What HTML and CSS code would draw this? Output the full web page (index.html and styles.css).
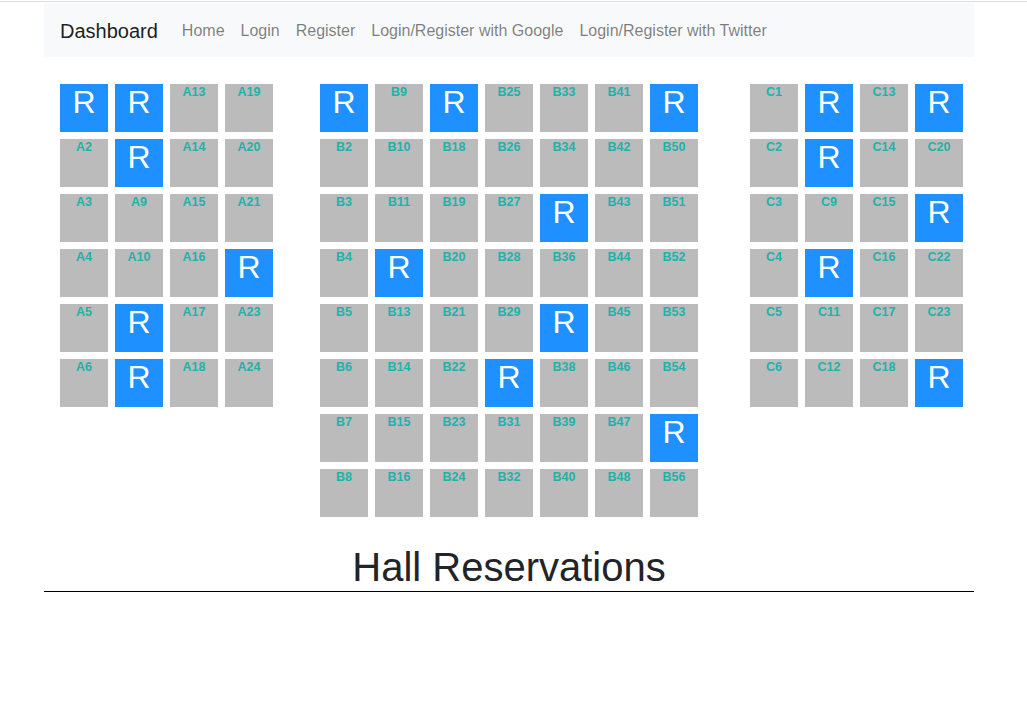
FILE: index.html
```html
<!DOCTYPE html>
<html lang="en">
<head>
    <meta charset="UTF-8">
    <meta name="viewport" content="width=device-width, initial-scale=1.0">
    <title>Hall Reservations</title>
    <link rel="stylesheet" href="styles.css">
</head>
<body>
    <div class="topline"></div>

    <div class="container">
        <nav class="navbar">
            <a class="brand" href="#">Dashboard</a>
            <a class="nav-link" href="#">Home</a>
            <a class="nav-link" href="#">Login</a>
            <a class="nav-link" href="#">Register</a>
            <a class="nav-link" href="#">Login/Register with Google</a>
            <a class="nav-link" href="#">Login/Register with Twitter</a>
        </nav>

        <div class="hall">
            <div class="section section-a" id="sectionA"></div>
            <div class="section section-b" id="sectionB"></div>
            <div class="section section-c" id="sectionC"></div>
        </div>

        <h1 class="title">Hall Reservations</h1>
        <hr class="line">
    </div>

    <script>
        let sections = [
            { el: 'sectionA', prefix: 'A', count: 24, reserved: [1, 7, 8, 11, 12, 22] },
            { el: 'sectionB', prefix: 'B', count: 56, reserved: [1, 12, 17, 30, 35, 37, 49, 55] },
            { el: 'sectionC', prefix: 'C', count: 24, reserved: [7, 8, 10, 19, 21, 24] }
        ];

        sections.forEach(function(section){
            let box = document.getElementById(section.el);
            let html = '';
            for(let i = 1; i <= section.count; i++){
                if(section.reserved.includes(i)){
                    html += `<div class="seat reserved" title="${section.prefix}${i}">R</div>`;
                }else{
                    html += `<div class="seat">${section.prefix}${i}</div>`;
                }
            }
            box.innerHTML = html;
        });
    </script>
</body>
</html>
```

FILE: styles.css
```css
*{
    padding: 0;
    margin: 0;
    box-sizing: border-box;
    font-family: "Liberation Sans", Arial, sans-serif;
}
body{
    background-color: #fff;
    color: #212529;
    padding-top: 1px;
}
.topline{
    height: 1px;
    background-color: #dcdcdc;
    margin-bottom: 1px;
}
.container{
    width: 930px;
    margin-left: 44px;
}
.navbar{
    height: 54px;
    background-color: #f8f9fa;
    display: flex;
    align-items: center;
    padding: 2px 16px 0;
}
.navbar a{
    text-decoration: none;
}
.brand{
    font-size: 20px;
    color: rgba(0, 0, 0, 0.9);
    margin-right: 16px;
    line-height: 30px;
}
.nav-link{
    font-size: 16px;
    color: rgba(0, 0, 0, 0.5);
    padding: 0 8px;
    line-height: 24px;
}
.hall{
    display: flex;
    align-items: flex-start;
    margin-top: 27px;
    padding-left: 16px;
}
.section{
    display: grid;
    grid-auto-flow: column;
    grid-auto-columns: 48px;
    gap: 7px;
}
.section-a, .section-c{
    grid-template-rows: repeat(6, 48px);
}
.section-b{
    grid-template-rows: repeat(8, 48px);
    margin-left: 47px;
}
.section-c{
    margin-left: 52px;
}
.seat{
    width: 48px;
    height: 48px;
    background-color: #bbb;
    color: #20b2aa;
    font-size: 12.5px;
    font-weight: bold;
    text-align: center;
    padding-top: 1px;
}
.seat.reserved{
    background-color: #1e90ff;
    color: #fff;
    font-size: 32px;
    font-weight: normal;
    padding-top: 0;
}
.title{
    margin-top: 26px;
    font-size: 40px;
    font-weight: 500;
    line-height: 48px;
    text-align: center;
}
.line{
    border: none;
    border-top: 1px solid #000;
}
```
